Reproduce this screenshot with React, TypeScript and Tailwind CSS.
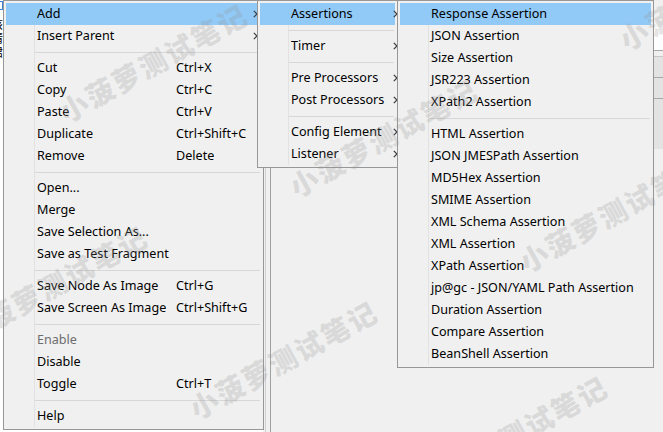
type Item =
  | 'sep'
  | { label: string; shortcut?: string; arrow?: boolean; active?: boolean; disabled?: boolean };

const MAIN: Item[] = [
  { label: 'Add', arrow: true, active: true },
  { label: 'Insert Parent', arrow: true },
  'sep',
  { label: 'Cut', shortcut: 'Ctrl+X' },
  { label: 'Copy', shortcut: 'Ctrl+C' },
  { label: 'Paste', shortcut: 'Ctrl+V' },
  { label: 'Duplicate', shortcut: 'Ctrl+Shift+C' },
  { label: 'Remove', shortcut: 'Delete' },
  'sep',
  { label: 'Open...' },
  { label: 'Merge' },
  { label: 'Save Selection As...' },
  { label: 'Save as Test Fragment' },
  'sep',
  { label: 'Save Node As Image', shortcut: 'Ctrl+G' },
  { label: 'Save Screen As Image', shortcut: 'Ctrl+Shift+G' },
  'sep',
  { label: 'Enable', disabled: true },
  { label: 'Disable' },
  { label: 'Toggle', shortcut: 'Ctrl+T' },
  'sep',
  { label: 'Help' },
];

const ADD: Item[] = [
  { label: 'Assertions', arrow: true, active: true },
  'sep',
  { label: 'Timer', arrow: true },
  'sep',
  { label: 'Pre Processors', arrow: true },
  { label: 'Post Processors', arrow: true },
  'sep',
  { label: 'Config Element', arrow: true },
  { label: 'Listener', arrow: true },
];

const ASSERTIONS: Item[] = [
  { label: 'Response Assertion', active: true },
  { label: 'JSON Assertion' },
  { label: 'Size Assertion' },
  { label: 'JSR223 Assertion' },
  { label: 'XPath2 Assertion' },
  'sep',
  { label: 'HTML Assertion' },
  { label: 'JSON JMESPath Assertion' },
  { label: 'MD5Hex Assertion' },
  { label: 'SMIME Assertion' },
  { label: 'XML Schema Assertion' },
  { label: 'XML Assertion' },
  { label: 'XPath Assertion' },
  { label: 'jp@gc - JSON/YAML Path Assertion' },
  { label: 'Duration Assertion' },
  { label: 'Compare Assertion' },
  { label: 'BeanShell Assertion' },
];

// watermark tiles, centre points
const MARKS = [
  'left-[153px] top-[62px]',
  'left-[383px] top-[137px]',
  'left-[713px] top-[-10px]',
  'left-[613px] top-[212px]',
  'left-[53px] top-[284px]',
  'left-[283px] top-[359px]',
  'left-[513px] top-[434px]',
];

function Chevron() {
  return (
    <svg width="5" height="8" viewBox="0 0 5 8" className="shrink-0">
      <path d="M0.8 0.8 L4 4 L0.8 7.2" fill="none" stroke="#3a3a3a" strokeWidth="1.2" />
    </svg>
  );
}

function Menu({
  items,
  className,
  arrowGap,
  labelW,
}: {
  items: Item[];
  className: string;
  arrowGap: string;
  labelW: string;
}) {
  return (
    <div className={`absolute top-0 border border-[#979797] bg-[#f0f0f0] p-[2px] ${className}`}>
      <div className="absolute left-[30px] top-[2px] bottom-[2px] w-px bg-[#e2e2e2]" />
      {items.map((it, i) =>
        it === 'sep' ? (
          <div key={i} className="h-[10px] flex items-center">
            <div className="ml-[28px] mr-px h-px flex-1 bg-[#d7d7d7]" />
          </div>
        ) : (
          <div
            key={i}
            className={`relative h-[22px] flex items-center pl-[31px] whitespace-nowrap ${
              it.active ? 'bg-[#91c9f7]' : ''
            } ${it.disabled ? 'text-[#6d6d6d]' : 'text-black'}`}
          >
            <span className={`shrink-0 ${labelW}`}>{it.label}</span>
            {it.shortcut && <span>{it.shortcut}</span>}
            {it.arrow && (
              <span className={`ml-auto flex items-center ${arrowGap}`}>
                <Chevron />
              </span>
            )}
          </div>
        )
      )}
    </div>
  );
}

export default function App() {
  return (
    <div
      className="relative w-[663px] h-[432px] overflow-hidden bg-[#f0f0f0] text-[12.6px] leading-[22px]"
      style={{ fontFamily: '"Noto Sans", "Noto Sans CJK SC", sans-serif' }}
    >
      {/* application behind the popup */}
      <div className="flex h-full">
        <div className="w-[263px] bg-white overflow-hidden flex flex-col pt-[1px]">
          <div className="ml-[-6px] w-[9px] h-[9px] border border-[#3b82d6]" />
          <div className="ml-[-9px] mt-[8px] leading-[14px] text-[12px] text-black">
            <div>该</div>
            <div>请</div>
            <div>捃</div>
          </div>
        </div>
        <div className="w-[8px] flex">
          <div className="w-[2px]" />
          <div className="w-px bg-[#cfcfcf]" />
          <div className="w-[4px]" />
          <div className="w-px bg-[#a0a0a0]" />
        </div>
        <div className="flex-1 flex flex-col">
          <div className="h-[27px]" />
          <div className="h-[24px] bg-white border-b border-[#a8a8a8]" />
          <div className="h-[6px] border-b border-[#c8c8c8]" />
          <div className="h-[21px] bg-[#e3e3e3] border-b border-[#a8a8a8]" />
          <div className="h-[21px] bg-[#e3e3e3] border-b border-[#a8a8a8]" />
          <div className="h-[50px] bg-[#e3e3e3]" />
        </div>
      </div>

      {/* popup menus */}
      <Menu items={MAIN} className="left-[3px] w-[261px]" arrowGap="mr-[3px]" labelW="w-[139px]" />
      <Menu items={ADD} className="left-[257px] w-[141px]" arrowGap="mr-[-3px]" labelW="" />
      <Menu items={ASSERTIONS} className="left-[397px] w-[257px]" arrowGap="mr-[3px]" labelW="" />

      {/* watermark */}
      <div className="pointer-events-none absolute inset-0">
        {MARKS.map((m) => (
          <div
            key={m}
            className={`absolute ${m} -translate-x-1/2 -translate-y-1/2 -rotate-[29deg] whitespace-nowrap text-[28px] leading-none font-black tracking-[2px] text-[rgba(150,150,150,0.25)]`}
            style={{ fontFamily: '"Noto Sans CJK SC", sans-serif' }}
          >
            小菠萝测试笔记
          </div>
        ))}
      </div>
    </div>
  );
}
